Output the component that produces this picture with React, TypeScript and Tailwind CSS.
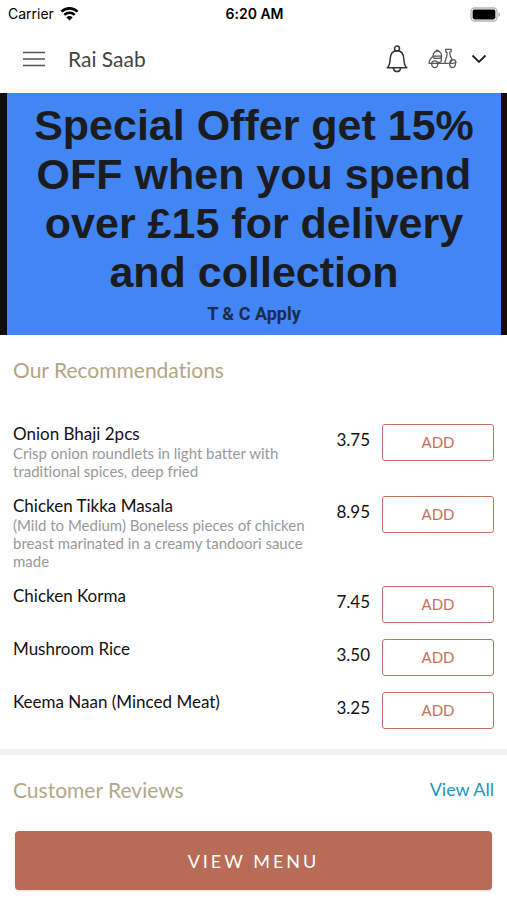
import React from 'react'

type Item = {
  name: string
  price: string
  description?: string
}

const items: Item[] = [
  {
    name: 'Onion Bhaji 2pcs',
    price: '3.75',
    description: 'Crisp onion roundlets in light batter with traditional spices, deep fried',
  },
  {
    name: 'Chicken Tikka Masala',
    price: '8.95',
    description:
      '(Mild to Medium) Boneless pieces of chicken breast marinated in a creamy tandoori sauce made',
  },
  { name: 'Chicken Korma', price: '7.45' },
  { name: 'Mushroom Rice', price: '3.50' },
  { name: 'Keema Naan (Minced Meat)', price: '3.25' },
]

function WifiIcon() {
  return (
    <svg width="19" height="14" viewBox="0 0 18 14" fill="none" stroke="#000" aria-hidden="true">
      <path d="M1 4.6a11.6 11.6 0 0 1 16 0" strokeWidth="2.6" />
      <path d="M3.8 7.8a7.6 7.6 0 0 1 10.4 0" strokeWidth="2.4" />
      <path d="M9 13.6 5.9 10.4a4.5 4.5 0 0 1 6.2 0Z" fill="#000" stroke="none" />
    </svg>
  )
}

function BatteryIcon() {
  return (
    <svg width="31" height="15" viewBox="0 0 31 15" aria-hidden="true">
      <rect x="1" y="1" width="26" height="13" rx="3.5" fill="#fff" stroke="#b5b5b5" strokeWidth="1.3" />
      <rect x="2.6" y="2.6" width="22.8" height="9.8" rx="1.8" fill="#000" />
      <path d="M28.4 5.2v4.6c1-.4 1.7-1.3 1.7-2.3s-.7-1.9-1.7-2.3Z" fill="#b5b5b5" />
    </svg>
  )
}

function BellIcon() {
  return (
    <svg width="22" height="28" viewBox="0 0 22 28" fill="none" stroke="#333" strokeWidth="1.5" aria-hidden="true">
      <circle cx="11" cy="3.6" r="2.5" />
      <path d="M1.2 22.8c2.200-2 2.800-4.300 2.900-8.300C4.300 9.300 6.800 5.800 11 5.800s6.700 3.500 6.900 8.700c.1 4 .7 6.300 2.900 8.300Z" strokeLinejoin="round" />
      <path d="M7.300 23c.4 2.300 1.800 3.600 3.700 3.600s3.300-1.300 3.700-3.600" />
    </svg>
  )
}

function ScooterIcon() {
  return (
    <svg width="29" height="21" viewBox="0 0 28 20" fill="none" stroke="#555" strokeWidth="1.2" strokeLinejoin="round" strokeLinecap="round" aria-hidden="true">
      <path d="M4.800 7.800C5 4.500 6.800 2.800 9 2.800s4 1.700 4.200 5Z" />
      <path d="M8 2.700c0-1.200 2-1.200 2 0" />
      <path d="M5.200 7.800C3 9.200 1 11.600 1 14.800h18.600" />
      <path d="M12.800 7.800v4.200c0 1.200-.8 1.800-2 1.800H9.600" />
      <path d="M5.200 9.400c1.400.7 5.600.7 7.600 0" />
      <path d="M3.500 14.800c.2 2.600 1.300 4 3 4s2.900-1.400 3.100-4c-.4-1.500-1.500-2.400-3.100-2.400s-2.700.9-3 2.400Z" />
      <path d="M17.200 1.200h5.200v2.200l-1.500.6c.2 3 1 5.400 2.600 7.300l-2.700 3.500" />
      <path d="M17.200 1.200v2.400l1.200.8c.2 2.400-.2 4.400-1.300 6.200-.7 1.200-.8 2.600-.7 4.200" />
      <path d="M20.800 14.800c.4-2.200 1.600-3.600 3.300-3.600 1.500 0 2.700 1 2.900 2.600l-3.400 1Z" />
      <path d="M20.800 14.900c.2 2.400 1.400 3.900 3 3.900s2.800-1.700 2.900-4.900" />
    </svg>
  )
}

function StatusBar() {
  return (
    <div className="grid grid-cols-3 items-center h-7 pl-2 pr-1.5 font-[Inter,sans-serif] text-sm text-black">
      <div className="flex items-center gap-1.5">
        <span>Carrier</span>
        <WifiIcon />
      </div>
      <span className="text-center font-semibold">6:20 AM</span>
      <div className="flex justify-end">
        <BatteryIcon />
      </div>
    </div>
  )
}

function Header() {
  return (
    <header className="flex items-center h-[65px] px-5 pb-1">
      <button type="button" aria-label="Menu" className="px-0.5">
        <svg width="24" height="16" viewBox="0 0 24 16" stroke="#555" strokeWidth="1.7" aria-hidden="true">
          <path d="M1 1.500h22M1 8h22M1 14.500h22" />
        </svg>
      </button>
      <h1 className="ml-5 text-[21px] leading-7 text-[#444]">Rai Saab</h1>
      <div className="ml-auto flex items-center">
        <button type="button" aria-label="Notifications">
          <BellIcon />
        </button>
        <button type="button" aria-label="Delivery or collection" className="ml-5 flex items-center gap-3.5">
          <ScooterIcon />
          <svg width="16" height="10" viewBox="0 0 16 10" fill="none" stroke="#222" strokeWidth="1.8" aria-hidden="true">
            <path d="m1.500 1.500 6.500 6.500 6.500-6.500" />
          </svg>
        </button>
      </div>
    </header>
  )
}

function Banner() {
  return (
    <section className="border-l-[7px] border-r-[6px] border-[#120c0e] bg-[#4285f4] pt-2 pb-2 text-center text-[#1b1c20]">
      <p className="px-5 font-['Liberation_Sans',sans-serif] text-[43px] leading-[49px] font-bold">
        Special Offer get 15% OFF when you spend over £15 for delivery and collection
      </p>
      <p className="pt-1 font-[Roboto,sans-serif] text-lg leading-[26px] font-bold text-[#1d2c4c]">T &amp; C Apply</p>
    </section>
  )
}

function MenuRow({ item }: { item: Item }) {
  return (
    <li className="flex items-start">
      <div className="flex-1 pr-7">
        <h3 className="text-[17px] leading-5 text-[#111]">{item.name}</h3>
        {item.description && (
          <p className="text-[15px] leading-[18px] text-[#999]">{item.description}</p>
        )}
      </div>
      <span className="pr-3 text-[17px] leading-8 text-[#111]">{item.price}</span>
      <button
        type="button"
        aria-label={`Add ${item.name}`}
        className="h-[37px] w-28 rounded-[3px] border border-[#c4705c] text-[15px] text-[#c4705c]"
      >
        ADD
      </button>
    </li>
  )
}

export default function App() {
  return (
    <div className="bg-white font-[Lato,sans-serif] [font-variant-ligatures:none]">
      <StatusBar />
      <Header />
      <main>
        <Banner />
        <section className="px-[13px] pt-5 pb-5">
          <h2 className="text-[21px] leading-[29px] text-[#b3a583]">Our Recommendations</h2>
          <ul className="flex flex-col gap-4 pt-10">
            {items.map((item) => (
              <MenuRow key={item.name} item={item} />
            ))}
          </ul>
        </section>
        <section className="border-t-[6px] border-[#f2f2f2] px-[13px] pt-5">
          <div className="flex items-center justify-between">
            <h2 className="text-[21px] leading-[29px] text-[#b0a98a]">Customer Reviews</h2>
            <a href="#reviews" className="text-lg leading-[29px] text-[#2196c0]">
              View All
            </a>
          </div>
        </section>
      </main>
      <div className="px-[15px] pt-[27px] pb-2.5">
        <button
          type="button"
          className="h-[59px] w-full rounded bg-[#b86b57] text-lg tracking-[3px] text-white shadow-sm"
        >
          VIEW MENU
        </button>
      </div>
    </div>
  )
}
